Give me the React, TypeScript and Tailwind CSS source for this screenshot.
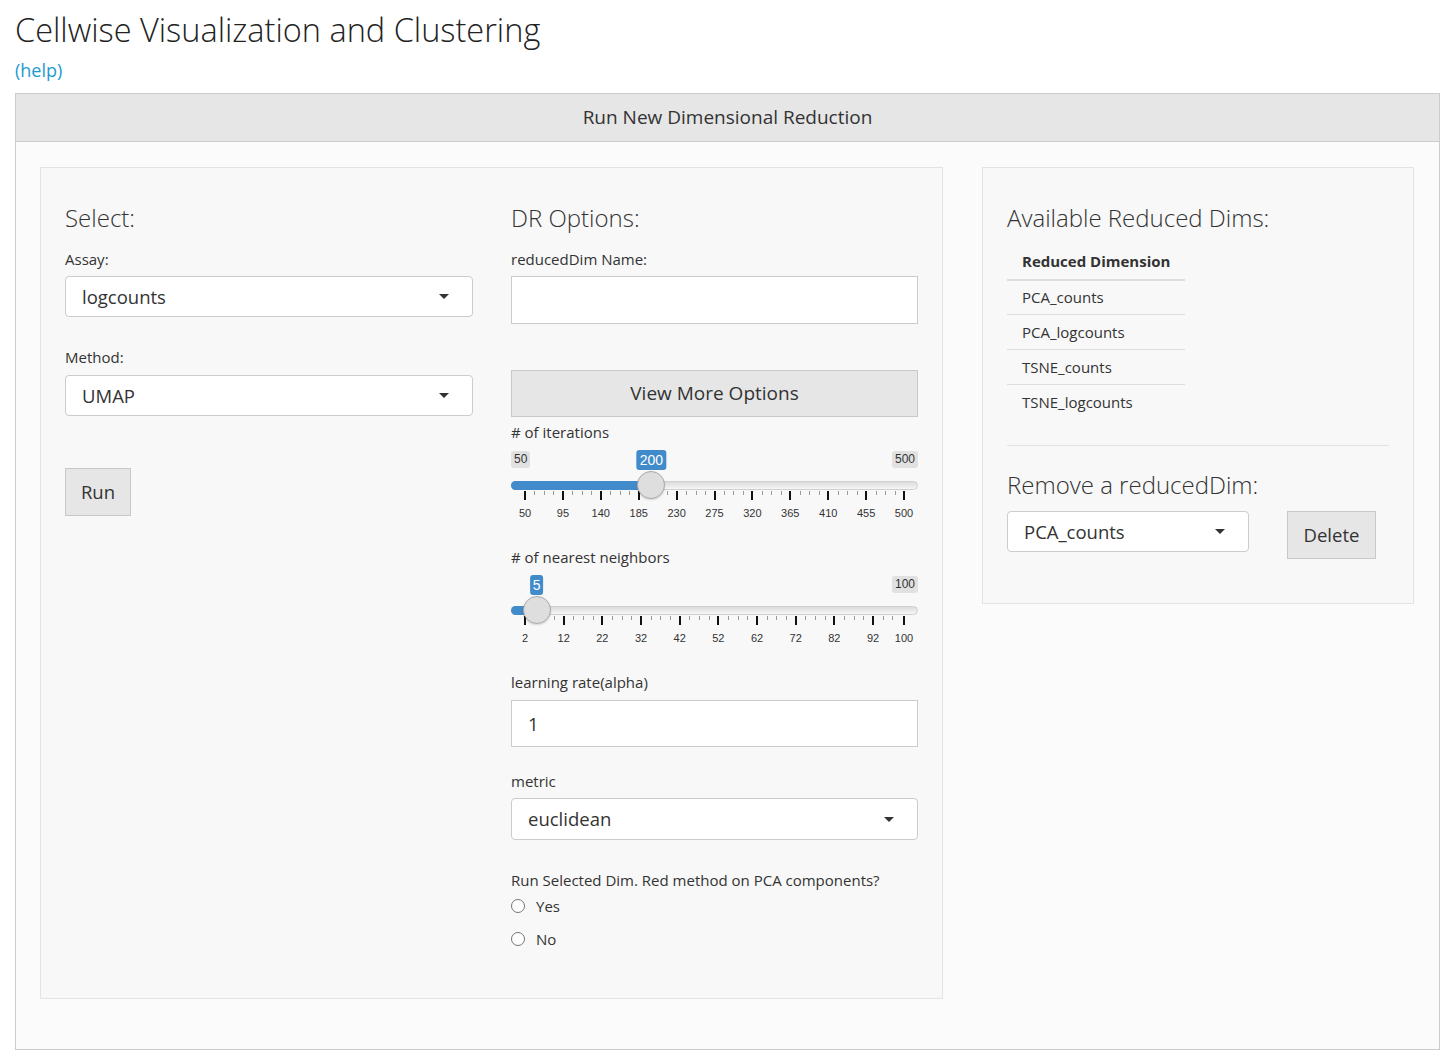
import React from 'react'

// slider geometry, in px relative to the slider block
const TRACK_W = 407
const HANDLE = 28

interface SliderProps {
  min: number
  max: number
  value: number
  majors: number[]
}

function toX(v: number, min: number, max: number) {
  return HANDLE / 2 + ((v - min) / (max - min)) * (TRACK_W - HANDLE)
}

function Slider({ min, max, value, majors }: SliderProps) {
  const hx = toX(value, min, max)
  const spacing = (majors[1] - majors[0]) / 4
  const minors: number[] = []
  for (let i = 0; i < majors.length - 1; i++) {
    for (let k = 1; k <= 3; k++) {
      const v = majors[i] + k * spacing
      if (v < majors[i + 1] - spacing * 0.3) minors.push(v)
    }
  }
  const showMin = hx - 20 > 24

  return (
    <div className="relative h-[105px] font-['Liberation_Sans',Arial,sans-serif]">
      {showMin && (
        <span className="absolute left-0 top-[9px] h-[17px] rounded-[3px] bg-[#e1e1e1] px-[3px] text-[12px] leading-[17px] text-[#333]">
          {min}
        </span>
      )}
      <span className="absolute right-0 top-[9px] h-[17px] rounded-[3px] bg-[#e1e1e1] px-[3px] text-[12px] leading-[17px] text-[#333]">
        {max}
      </span>
      <span
        className="absolute top-[8px] h-[20px] -translate-x-1/2 rounded-[3px] bg-[#428bca] px-[3px] text-[14px] leading-[20px] text-white"
        style={{ left: hx }}
      >
        {value}
      </span>

      <div className="absolute left-0 right-0 top-[39px] h-[9px] rounded-full border border-[#d0d0d0] bg-linear-to-b from-[#dcdcdc] to-[#f6f6f6]" />
      <div className="absolute left-0 top-[39px] h-[9px] rounded-l-full bg-[#428bca]" style={{ width: hx }} />

      {majors.map((v) => (
        <React.Fragment key={v}>
          <div className="absolute top-[49px] h-[9px] w-[2px] -translate-x-1/2 bg-[#111]" style={{ left: toX(v, min, max) }} />
          <span
            className="absolute top-[63px] -translate-x-1/2 text-[11px] leading-[16px] text-[#333]"
            style={{ left: toX(v, min, max) }}
          >
            {v}
          </span>
        </React.Fragment>
      ))}
      {minors.map((v) => (
        <div key={v} className="absolute top-[49px] h-[4px] w-px bg-[#999]" style={{ left: Math.round(toX(v, min, max)) }} />
      ))}

      <div
        className="absolute top-[29px] h-[28px] w-[28px] rounded-full border border-[#ababab] bg-[#dedede] shadow-[0_1px_2px_rgba(0,0,0,0.15)]"
        style={{ left: hx - HANDLE / 2 }}
      />
    </div>
  )
}

function Caret() {
  return <span className="h-0 w-0 border-x-[5px] border-t-[5px] border-x-transparent border-t-[#333]" />
}

function Select({ value, className }: { value: string; className: string }) {
  return (
    <div className={`flex items-center justify-between rounded-[4px] border border-[#cccccc] bg-white pl-[16px] pr-[23px] text-[18.5px] text-[#333] ${className}`}>
      <span>{value}</span>
      <Caret />
    </div>
  )
}

function Radio({ label, className }: { label: string; className: string }) {
  return (
    <label className={`flex h-[20px] items-center ${className}`}>
      <span className="h-[14px] w-[14px] rounded-full border border-[#767676] bg-white" />
      <span className="ml-[11px]">{label}</span>
    </label>
  )
}

const dims = ['PCA_counts', 'PCA_logcounts', 'TSNE_counts', 'TSNE_logcounts']

export default function App() {
  return (
    <div className="min-h-screen bg-white font-['Open_Sans',sans-serif] text-[15px] text-[#333]">
      <div className="px-[15px] pt-[10px]">
        <h1 className="text-[32.5px] font-light leading-[40px] text-[#222]">Cellwise Visualization and Clustering</h1>
        <a className="mt-[8px] block w-fit text-[18px] leading-[24px] text-[#1d9bd1]">(help)</a>

        <div className="mt-[11px] w-[1425px] border border-[#cccccc]">
          <div className="flex h-[48px] items-center justify-center border-b border-[#cccccc] bg-[#e6e6e6] text-[19px] text-[#333]">
            Run New Dimensional Reduction
          </div>

          <div className="flex items-start gap-[39px] bg-[#fbfbfb] px-[24px] pb-[50px] pt-[25px]">
            {/* left well */}
            <div className="flex w-[903px] gap-[38px] border border-[#e3e3e3] bg-[#f8f8f8] px-[24px] pb-[49px] pt-[37px]">
              <div className="flex w-[408px] flex-col">
                <h3 className="text-[24px] font-light leading-[26px]">Select:</h3>
                <label className="mt-[18px] leading-[20px]">Assay:</label>
                <Select value="logcounts" className="mt-[7px] h-[41px]" />
                <label className="mt-[30px] leading-[20px]">Method:</label>
                <Select value="UMAP" className="mt-[8px] h-[41px]" />
                <button className="mt-[52px] h-[48px] w-[66px] border border-[#c8c8c8] bg-[#e6e6e6] text-[18.5px] text-[#333]">
                  Run
                </button>
              </div>

              <div className="flex w-[407px] flex-col">
                <h3 className="text-[24px] font-light leading-[26px]">DR Options:</h3>
                <label className="mt-[18px] leading-[20px]">reducedDim Name:</label>
                <div className="mt-[7px] h-[48px] border border-[#cccccc] bg-white" />
                <button className="mt-[46px] h-[47px] w-full border border-[#c8c8c8] bg-[#e6e6e6] text-[19px] text-[#333]">
                  View More Options
                </button>
                <label className="mt-[5px] leading-[20px]"># of iterations</label>
                <Slider min={50} max={500} value={200} majors={[50, 95, 140, 185, 230, 275, 320, 365, 410, 455, 500]} />
                <label className="leading-[20px]"># of nearest neighbors</label>
                <Slider min={2} max={100} value={5} majors={[2, 12, 22, 32, 42, 52, 62, 72, 82, 92, 100]} />
                <label className="leading-[20px]">learning rate(alpha)</label>
                <div className="mt-[8px] flex h-[47px] items-center border border-[#cccccc] bg-white pl-[16px] text-[18.5px]">1</div>
                <label className="mt-[24px] leading-[20px]">metric</label>
                <Select value="euclidean" className="mt-[7px] h-[42px]" />
                <label className="mt-[30px] leading-[20px]">Run Selected Dim. Red method on PCA components?</label>
                <Radio label="Yes" className="mt-[6px]" />
                <Radio label="No" className="mt-[13px]" />
              </div>
            </div>

            {/* right well */}
            <div className="flex w-[432px] flex-col border border-[#e3e3e3] bg-[#f8f8f8] px-[24px] pb-[44px] pt-[37px]">
              <h3 className="text-[24px] font-light leading-[26px]">Available Reduced Dims:</h3>
              <div className="mt-[13px] flex w-[178px] flex-col">
                <div className="flex h-[37px] items-center border-b-2 border-[#dddddd] pl-[15px] font-bold">Reduced Dimension</div>
                {dims.map((d, i) => (
                  <div
                    key={d}
                    className={i === 0 ? 'flex h-[33px] items-center pl-[15px]' : 'flex h-[35px] items-center border-t border-[#dddddd] pl-[15px]'}
                  >
                    {d}
                  </div>
                ))}
              </div>
              <hr className="mt-[26px] border-t border-[#e3e3e3]" />
              <h3 className="mt-[26px] text-[24px] font-light leading-[26px]">Remove a reducedDim:</h3>
              <div className="mt-[13px] flex items-start">
                <Select value="PCA_counts" className="h-[41px] w-[242px]" />
                <button className="ml-[38px] h-[48px] w-[89px] border border-[#c8c8c8] bg-[#e6e6e6] text-[18.5px] text-[#333]">
                  Delete
                </button>
              </div>
            </div>
          </div>
        </div>
      </div>
    </div>
  )
}
